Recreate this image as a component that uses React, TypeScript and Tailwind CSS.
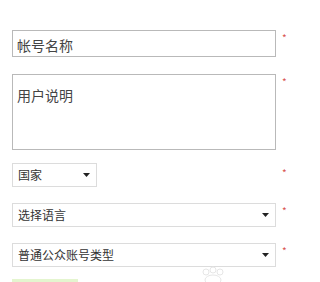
import React from 'react';

const Star = ({ top }: { top: string }) => (
  <span className={`ml-[6px] ${top} text-[10px] leading-none text-[#d9534f]`}>*</span>
);

const Arrow = () => (
  <svg width="7" height="4" viewBox="0 0 7 4" className="shrink-0">
    <path d="M0 0 L7 0 L3.5 4 Z" fill="#222" />
  </svg>
);

const SelectBox = ({ label, width }: { label: string; width: string }) => (
  <div className={`${width} h-[24px] flex items-center justify-between pl-[5px] pr-[6px] border border-[#dcdcdc] bg-white text-[12px] text-[#333]`}>
    <span>{label}</span>
    <Arrow />
  </div>
);

export default function App() {
  return (
    <div
      className="w-[287px] h-[282px] bg-white overflow-hidden relative pl-[12px] pt-[30px]"
      style={{ fontFamily: '"Noto Sans CJK SC", "Liberation Sans", sans-serif' }}
    >
      <div className="flex items-start">
        <div className="w-[264px] h-[27px] border border-[#b9b9b9] pl-[4px] pt-[5px] text-[14px] leading-[18px] text-[#444]">
          帐号名称
        </div>
        <Star top="mt-[3px]" />
      </div>

      <div className="flex items-start mt-[17px]">
        <div className="w-[264px] h-[76px] border border-[#b9b9b9] pl-[4px] pt-[11px] text-[14px] leading-[18px] text-[#444]">
          用户说明
        </div>
        <Star top="mt-[3px]" />
      </div>

      <div className="flex items-start mt-[13px]">
        <SelectBox label="国家" width="w-[85px]" />
        <div className="w-[179px]" />
        <Star top="mt-[5px]" />
      </div>

      <div className="flex items-start mt-[16px]">
        <SelectBox label="选择语言" width="w-[264px]" />
        <Star top="mt-[3px]" />
      </div>

      <div className="flex items-start mt-[16px]">
        <SelectBox label="普通公众账号类型" width="w-[264px]" />
        <Star top="mt-[3px]" />
      </div>

      <div className="mt-[12px] w-[66px] h-[10px] bg-[#e4f5cf]" />

      <svg className="absolute left-[196px] top-[266px]" width="34" height="16" viewBox="0 0 34 16">
        <g fill="none" stroke="#e6e6e6" strokeWidth="1">
          <circle cx="10" cy="6" r="3" />
          <circle cx="17" cy="4" r="3" />
          <circle cx="24" cy="6" r="3" />
          <ellipse cx="17" cy="14" rx="8" ry="5" />
        </g>
      </svg>
    </div>
  );
}
